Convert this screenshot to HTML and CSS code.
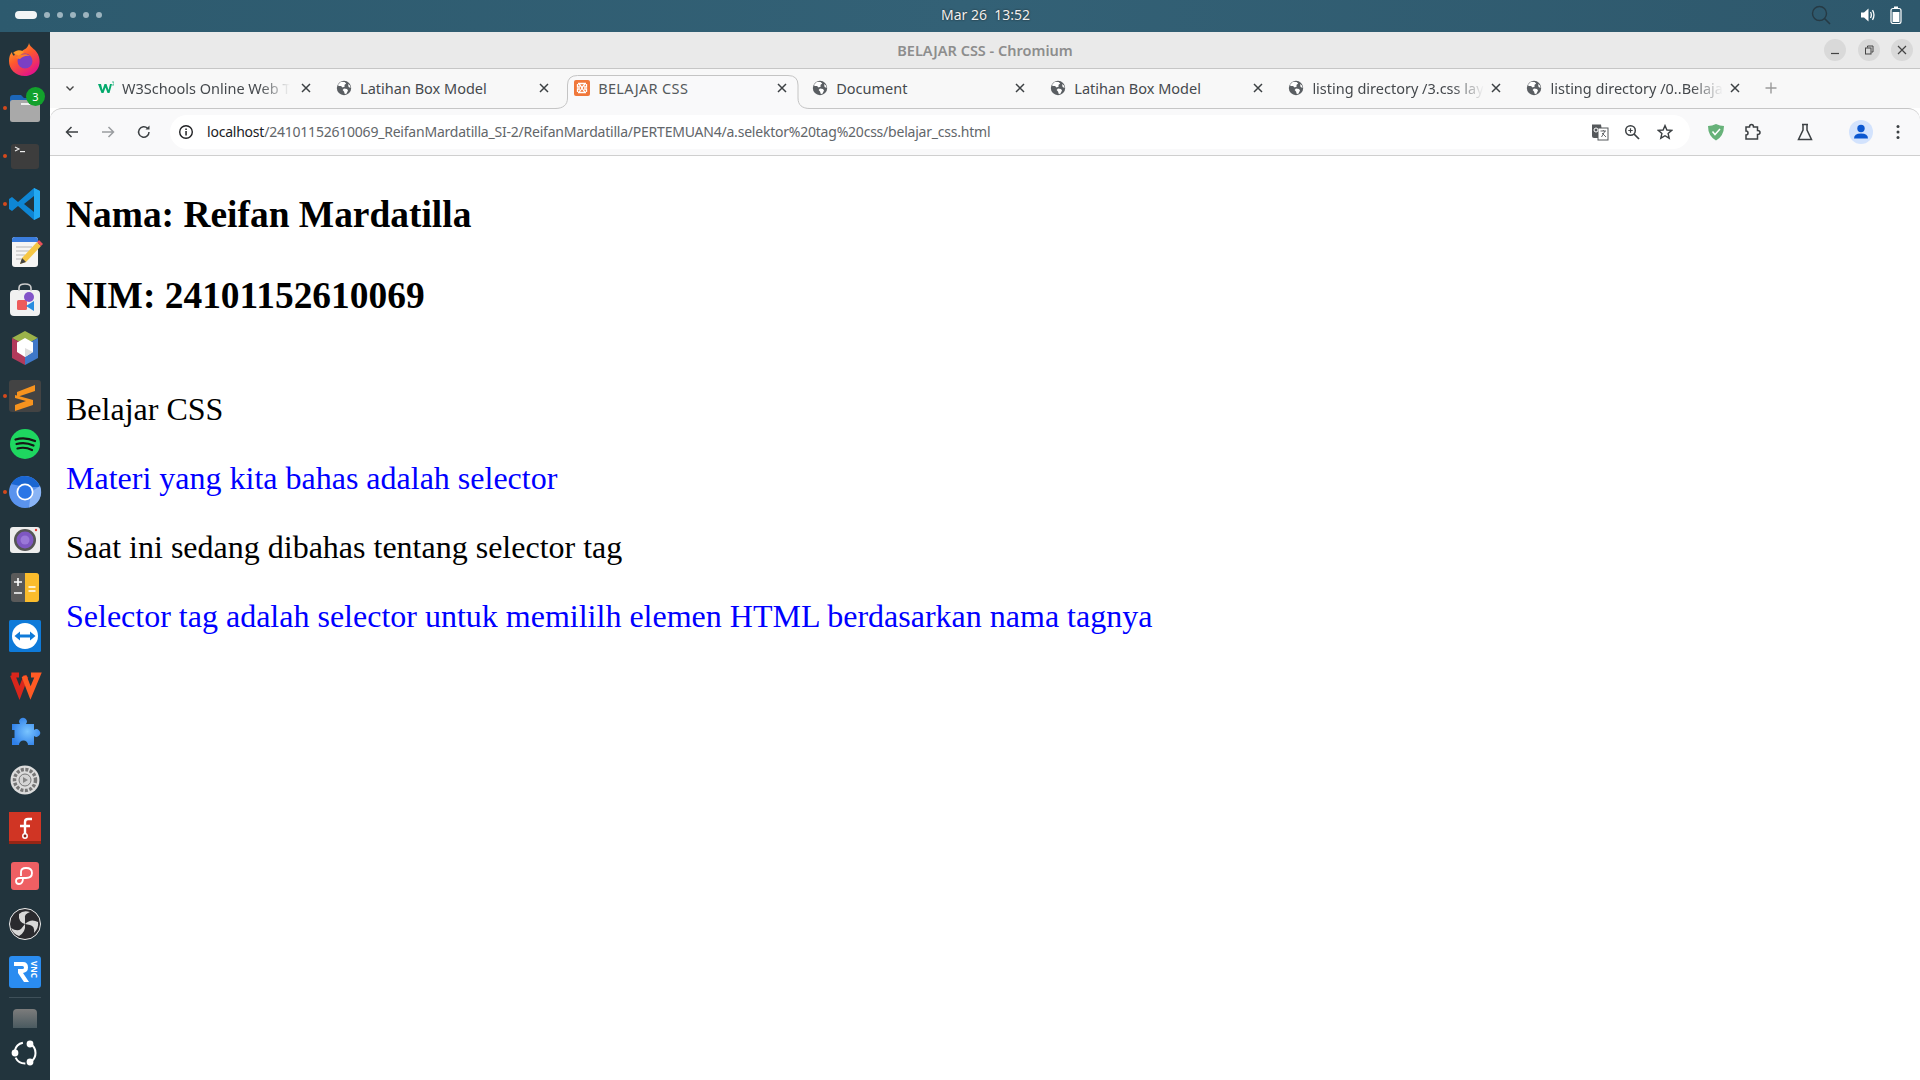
FILE: index.html
```html
<!DOCTYPE html>
<html>
<head>
<meta charset="utf-8">
<title>BELAJAR CSS - Chromium</title>
<link rel="stylesheet" href="styles.css">
</head>
<body>

<svg class="defs" width="0" height="0">
  <symbol id="globe" viewBox="0 0 16 16">
    <circle cx="8" cy="8" r="7.2" fill="#5a5e62"/>
    <path d="M5 1.8 L8.6 2 L10.2 3.6 L8.4 5 L8.8 6.6 L6.6 7.4 L5 6 L2.4 6 L2.2 4.6Z M8 8.4 L11 9 L12 10.6 L10.4 13.8 L8.8 14 L8 11.4 L6.6 10Z M12 4 L14 5.4 L14.6 8 L12.6 7Z" fill="#fff"/>
  </symbol>
  <symbol id="close" viewBox="0 0 12 12">
    <path d="M2 2 L10 10 M10 2 L2 10" stroke="#3c4043" stroke-width="1.5" fill="none"/>
  </symbol>
</svg>

<!-- top panel -->
<div class="panel">
  <div class="workspaces">
    <span class="ws-pill"></span>
    <span class="ws-dot"></span><span class="ws-dot"></span><span class="ws-dot"></span><span class="ws-dot"></span><span class="ws-dot"></span>
  </div>
  <div class="clock">Mar 26&nbsp;&nbsp;13:52</div>
  <div class="tray">
    <svg width="24" height="24" viewBox="0 0 24 24" class="tray-search"><circle cx="10.5" cy="10.5" r="7" fill="none" stroke="#263a44" stroke-width="1.4"/><path d="M15.5 15.5 L21 21" stroke="#263a44" stroke-width="1.6"/></svg>
    <svg width="16" height="16" viewBox="0 0 16 16" class="tray-vol"><path d="M1 5.5 H4 L8.5 1.5 V14.5 L4 10.5 H1Z" fill="#fff"/><path d="M10.5 5 Q12.2 8 10.5 11 M12.5 3.2 Q15.4 8 12.5 12.8" stroke="#fff" stroke-width="1.3" fill="none"/></svg>
    <svg width="12" height="18" viewBox="0 0 12 18" class="tray-bat"><rect x="4" y="0.5" width="4" height="2" fill="#fff"/><rect x="1" y="2.5" width="10" height="15" rx="2" fill="none" stroke="#fff" stroke-width="1.2"/><rect x="2.6" y="6" width="6.8" height="10" fill="#fff"/></svg>
  </div>
</div>

<div class="desktop">

  <!-- dock -->
  <div class="dock">
    <div class="dock-item">
      <svg width="40" height="40" viewBox="0 0 40 40"><defs><linearGradient id="fx" x1="0" y1="0" x2="0.6" y2="1"><stop offset="0" stop-color="#ffbd2e"/><stop offset="0.5" stop-color="#ff5a2c"/><stop offset="1" stop-color="#e31587"/></linearGradient></defs><path d="M24 3 C25 8 32 9 34 17 C37 29 28 36 20 36 C10 36 4 29 4 21 C4 17 5 14 7 12 C7 14 8 15 9 16 C10 12 14 10 17 11 C20 9 23 8 24 3Z" fill="url(#fx)"/><path d="M8 13 C12 9 16 10 19 12 L14 16Z" fill="#ff9a2b"/><circle cx="20" cy="21" r="7.5" fill="#7b3fc4"/><path d="M10 18 C14 14 22 13 25 16 C21 15 17 17 15 19Z" fill="#ff7b2c"/></svg>
    </div>
    <div class="dock-item running">
      <svg width="40" height="40" viewBox="0 0 40 40"><path d="M5 10 Q5 7 8 7 H16 L19 10 H28 V20 H5Z" fill="#1c66b8"/><rect x="5" y="12" width="30" height="22" rx="2.500" fill="#a9a9a9"/><rect x="16" y="15" width="9" height="2" fill="#eee"/></svg>
      <span class="dock-badge">3</span>
    </div>
    <div class="dock-item running">
      <svg width="40" height="40" viewBox="0 0 40 40"><rect x="6" y="8" width="28" height="25" rx="3" fill="#3d3d3d"/><path d="M10 11 L14 13 L10 15" stroke="#eee" stroke-width="1.100" fill="none"/><rect x="15" y="15" width="5" height="1.200" fill="#eee"/></svg>
    </div>
    <div class="dock-item running">
      <svg width="40" height="40" viewBox="0 0 40 40"><path d="M29 4 L35 7 V33 L29 36 L13 22 L7 27 L4 25 V15 L7 13 L13 18Z M29 12 L19 20 L29 28Z" fill="#0e86d4" fill-rule="evenodd"/><path d="M29 4 L35 7 V33 L29 36Z" fill="#23a9f2"/></svg>
    </div>
    <div class="dock-item">
      <svg width="40" height="40" viewBox="0 0 40 40"><rect x="7" y="5" width="26" height="30" rx="3" fill="#f6f5f4"/><path d="M7 8 Q7 5 10 5 H30 Q33 5 33 8 V10 H7Z" fill="#3b7ddd"/><path d="M11 15 H27 M11 19 H24 M11 23 H20 M11 27 H16" stroke="#b5b5b5" stroke-width="1.2"/><path d="M15 32 L17 26 L32 10 L36 14 L21 30Z" fill="#f6c644"/><path d="M32 10 L34 8 L38 12 L36 14Z" fill="#e8505b"/><path d="M15 32 L17 26 L21 30Z" fill="#444"/></svg>
    </div>
    <div class="dock-item">
      <svg width="40" height="40" viewBox="0 0 40 40"><rect x="5" y="10" width="30" height="26" rx="4" fill="#f1f1f1"/><path d="M14 11 V8 Q14 4 20 4 Q26 4 26 8 V11" fill="none" stroke="#ccc" stroke-width="1.6"/><rect x="12" y="20" width="10" height="10" rx="1.5" fill="#ed5b5b"/><circle cx="24" cy="17" r="5" fill="#8354c9"/><path d="M29 21 V31 L21 26Z" fill="#2a8de0"/></svg>
    </div>
    <div class="dock-item">
      <svg width="40" height="40" viewBox="0 0 40 40"><path d="M20 3 L33 10 L20 17 L7 10Z" fill="#9bb24a"/><path d="M7 10 L20 17 V37 L7 30Z" fill="#b23a5b"/><path d="M33 10 L20 17 V37 L33 30Z" fill="#3f78c8"/><path d="M20 10 L28 14.5 V24 L20 29 L12 24 V14.5Z" fill="#fff"/><path d="M20 20 L28 24 L20 29Z" fill="#ddd"/></svg>
    </div>
    <div class="dock-item running">
      <svg width="40" height="40" viewBox="0 0 40 40"><rect x="4" y="4" width="32" height="32" rx="3" fill="#434343"/><path d="M30 9 V15 L12 21 V16Z M10 19 L28 24 V29 L10 35 V29 L21 25 L10 22Z" fill="#f7931e"/></svg>
    </div>
    <div class="dock-item">
      <svg width="40" height="40" viewBox="0 0 40 40"><circle cx="20" cy="20" r="15" fill="#1ed760"/><path d="M10.5 15.5 Q20 12.5 30 17 M11.5 20 Q20 17.5 28.5 21.5 M12.5 24.5 Q20 22.5 27 26" stroke="#161616" stroke-width="2.2" stroke-linecap="round" fill="none"/></svg>
    </div>
    <div class="dock-item running">
      <svg width="40" height="40" viewBox="0 0 40 40"><circle cx="20" cy="20" r="16" fill="#5a93ee"/><path d="M6 12 A16 16 0 0 1 35 15 L20 15Z" fill="#1a66d2"/><path d="M24 35.5 A16 16 0 0 0 35 14 L26 20Z" fill="#8ab4f5"/><circle cx="20" cy="20" r="8.5" fill="#fff"/><circle cx="20" cy="20" r="6.8" fill="#2a75e6"/></svg>
    </div>
    <div class="dock-item">
      <svg width="40" height="40" viewBox="0 0 40 40"><rect x="5" y="7" width="30" height="26" rx="3" fill="#ededed"/><circle cx="20" cy="20" r="11" fill="#555"/><circle cx="20" cy="20" r="8.5" fill="#7e57c2"/><circle cx="20" cy="20" r="4.5" fill="#9a78d8"/><circle cx="31" cy="10" r="1.2" fill="#e53935"/></svg>
    </div>
    <div class="dock-item">
      <svg width="40" height="40" viewBox="0 0 40 40"><rect x="6" y="5" width="28" height="29" rx="3" fill="#5a5a5a"/><path d="M20 5 H31 Q34 5 34 8 V31 Q34 34 31 34 H20Z" fill="#fbbc2c"/><path d="M9 14 H17 M13 10 V18 M9 25 H17 M23.500 19 H30.500 M23.500 23 H30.500" stroke="#fff" stroke-width="1.6"/></svg>
    </div>
    <div class="dock-item">
      <svg width="40" height="40" viewBox="0 0 40 40"><rect x="4" y="4" width="32" height="32" rx="1.500" fill="#0e7ad9"/><circle cx="20" cy="20" r="13" fill="#fff"/><path d="M9.500 20 L15 15.500 V18.500 H25 V15.500 L30.500 20 L25 24.500 V21.500 H15 V24.500Z" fill="#0e7ad9"/></svg>
    </div>
    <div class="dock-item">
      <svg width="40" height="40" viewBox="0 0 40 40"><path d="M6.500 11 H14 M7.500 11 L14.500 29 L21 12" fill="none" stroke="#d9261c" stroke-width="5"/><path d="M19 12 L25.500 29 L33 11 H26" fill="none" stroke="#ff5a24" stroke-width="5"/></svg>
    </div>
    <div class="dock-item">
      <svg width="40" height="40" viewBox="0 0 40 40"><defs><radialGradient id="pz" cx="0.55" cy="0.5" r="0.6"><stop offset="0" stop-color="#79c4ff"/><stop offset="1" stop-color="#2f7fe8"/></radialGradient></defs><path d="M7 12 H15 A3.800 3.800 0 1 1 21 12 H29 V18 A3.800 3.800 0 1 1 29 24 V33 H23 A4.500 4.500 0 1 0 14 33 H7 V26 H9.500 V18 H7Z" fill="url(#pz)"/></svg>
    </div>
    <div class="dock-item">
      <svg width="40" height="40" viewBox="0 0 40 40"><circle cx="20" cy="20" r="14.500" fill="#dcdcdc"/><circle cx="20" cy="20" r="10.500" fill="none" stroke="#777" stroke-width="3.500" stroke-dasharray="3 1.500"/><circle cx="20" cy="20" r="6" fill="#d4d4d4" stroke="#777" stroke-width="1"/><path d="M18 17 L23 20 L18 23Z" fill="#888"/></svg>
    </div>
    <div class="dock-item">
      <svg width="40" height="40" viewBox="0 0 40 40"><rect x="4" y="4" width="32" height="32" fill="#d03524"/><rect x="4" y="33" width="32" height="3" fill="#962515"/><path d="M27 11 H23 Q20 11 20 14 V27 M15 18 H25" stroke="#fff" stroke-width="2.400" fill="none"/><circle cx="20" cy="28" r="2.200" fill="#8f2115" stroke="#fff" stroke-width="1.500"/></svg>
    </div>
    <div class="dock-item">
      <svg width="40" height="40" viewBox="0 0 40 40"><rect x="6" y="6" width="28" height="28" rx="3" fill="#ee5f63"/><path d="M16 20 V16 Q16 12 21 12 Q27 12 27 17 Q27 22 21 22 H15 Q11 22 11 25 Q11 28 14 28 Q18 28 18 22" stroke="#fff" stroke-width="1.800" fill="none"/></svg>
    </div>
    <div class="dock-item">
      <svg width="40" height="40" viewBox="0 0 40 40"><circle cx="20" cy="20" r="15.500" fill="#2a2a2e" stroke="#eee" stroke-width="1"/><path d="M20 20 Q13 18 14 10 Q18 6 25 8 Q19 10 20 14 Z M20 20 Q26 14 33 18 Q34 24 29 29 Q30 22 25 21 Z M20 20 Q21 28 14 32 Q8 30 6 24 Q12 28 16 25 Z" fill="#d8d8d8"/></svg>
    </div>
    <div class="dock-item">
      <svg width="40" height="40" viewBox="0 0 40 40"><rect x="4" y="4" width="32" height="32" rx="3" fill="#2a8cf0"/><path d="M9 10 H18 Q23 10 23 15.500 Q23 20 18 21 L24 30 H19 L13 21 V17 H17.500 Q19 17 19 15.500 Q19 14 17.500 14 H9Z" fill="#fff"/><text x="0" y="0" class="rvnc" transform="translate(26 9) rotate(90)">VNC</text></svg>
    </div>
    <div class="dock-sep"></div>
    <div class="dock-trash"></div>
    <div class="dock-ubuntu">
      <svg width="32" height="32" viewBox="0 0 32 32"><circle cx="16" cy="16" r="10.500" fill="none" stroke="#fff" stroke-width="2" stroke-dasharray="12 7" stroke-dashoffset="3"/><circle cx="6" cy="16" r="3.400" fill="#fff"/><circle cx="21" cy="7" r="3.400" fill="#fff"/><circle cx="21" cy="25" r="3.400" fill="#fff"/></svg>
    </div>
  </div>

  <!-- browser window -->
  <div class="window">
    <div class="titlebar">
      <span class="title-text">BELAJAR CSS - Chromium</span>
      <div class="win-btns">
        <span class="win-btn"><svg width="12" height="12" viewBox="0 0 12 12"><path d="M2 9.500 H10" stroke="#444" stroke-width="1.200"/></svg></span>
        <span class="win-btn"><svg width="12" height="12" viewBox="0 0 12 12"><rect x="2.500" y="4" width="5.500" height="6" fill="none" stroke="#444" stroke-width="1"/><path d="M4.500 3.500 V2 H10 V8 H8.500" fill="none" stroke="#444" stroke-width="1"/></svg></span>
        <span class="win-btn"><svg width="12" height="12" viewBox="0 0 12 12"><path d="M2 2 L10 10 M10 2 L2 10" stroke="#444" stroke-width="1.200"/></svg></span>
      </div>
    </div>

    <div class="tabstrip">
      <div class="tab-list-btn"><svg width="12" height="12" viewBox="0 0 12 12"><path d="M2.500 4.500 L6 8 L9.500 4.500" fill="none" stroke="#444" stroke-width="1.400"/></svg></div>
      <div class="tab">
        <svg class="tab-icon" width="16" height="16" viewBox="0 0 16 16"><path d="M0 4 H3 L4.500 10 L6.500 4 H8.500 L10.500 10 L12 4 H14 L11.500 13 H9.500 L7.500 7.500 L5.500 13 H3.500Z" fill="#04aa6d"/><path d="M14 2 H16 V5 H14" stroke="#04aa6d" fill="none" stroke-width="0.700"/></svg>
        <span class="tab-title fade">W3Schools Online Web T</span>
        <svg class="tab-close" width="12" height="12"><use href="#close"/></svg>
      </div>
      <div class="tab">
        <svg class="tab-icon" width="16" height="16"><use href="#globe"/></svg>
        <span class="tab-title">Latihan Box Model</span>
        <svg class="tab-close" width="12" height="12"><use href="#close"/></svg>
      </div>
      <div class="tab active">
        <svg class="tab-shape" width="255" height="34" viewBox="0 0 255 34"><path d="M0 34 V33.500 C8 33.500 12.500 30 12.500 23 V10 Q12.500 0.500 22.500 0.500 H233 Q243 0.500 243 10 V23 C243 30 247 33.500 255 33.500 V34Z" fill="#f9f9fa"/><path d="M0 33.500 C8 33.500 12.500 30 12.500 23 V10 Q12.500 0.500 22.500 0.500 H233 Q243 0.500 243 10 V23 C243 30 247 33.500 255 33.500" fill="none" stroke="#c4c4c4"/></svg>
        <svg class="tab-icon" width="16" height="16" viewBox="0 0 16 16"><rect width="16" height="16" rx="2" fill="#f0773a"/><path d="M4 3.500 H12 M4 12.500 H12 M5 4 Q7 6 8 8 Q9 6 11 4 M5 12 Q7 10 8 8 Q9 10 11 12 M3.500 4 V7 H6 M12.500 4 V7 H10 M3.500 12 V9 H6 M12.500 12 V9 H10" fill="none" stroke="#fff" stroke-width="1.300"/></svg>
        <span class="tab-title">BELAJAR CSS</span>
        <svg class="tab-close" width="12" height="12"><use href="#close"/></svg>
      </div>
      <div class="tab">
        <svg class="tab-icon" width="16" height="16"><use href="#globe"/></svg>
        <span class="tab-title">Document</span>
        <svg class="tab-close" width="12" height="12"><use href="#close"/></svg>
      </div>
      <div class="tab">
        <svg class="tab-icon" width="16" height="16"><use href="#globe"/></svg>
        <span class="tab-title">Latihan Box Model</span>
        <svg class="tab-close" width="12" height="12"><use href="#close"/></svg>
      </div>
      <div class="tab">
        <svg class="tab-icon" width="16" height="16"><use href="#globe"/></svg>
        <span class="tab-title fade">listing directory /3.css lay</span>
        <svg class="tab-close" width="12" height="12"><use href="#close"/></svg>
      </div>
      <div class="tab">
        <svg class="tab-icon" width="16" height="16"><use href="#globe"/></svg>
        <span class="tab-title fade">listing directory /0..Belaja</span>
        <svg class="tab-close" width="12" height="12"><use href="#close"/></svg>
      </div>
      <div class="new-tab"><svg width="14" height="14" viewBox="0 0 14 14"><path d="M7 1.500 V12.500 M1.500 7 H12.500" stroke="#9a9a9a" stroke-width="1.400"/></svg></div>
    </div>

    <div class="toolbar">
      <svg class="nav-btn" width="16" height="16" viewBox="0 0 16 16"><path d="M14 8 H3 M7.500 3 L2.500 8 L7.500 13" fill="none" stroke="#3c4043" stroke-width="1.500"/></svg>
      <svg class="nav-btn" width="16" height="16" viewBox="0 0 16 16"><path d="M2 8 H13 M8.500 3 L13.500 8 L8.500 13" fill="none" stroke="#9a9da0" stroke-width="1.500"/></svg>
      <svg class="nav-btn" width="16" height="16" viewBox="0 0 16 16"><path d="M13 8 A5.200 5.200 0 1 1 11.500 4.300" fill="none" stroke="#3c4043" stroke-width="1.500"/><path d="M9.500 5.500 H13.500 V1.500Z" fill="#3c4043"/></svg>
      <div class="omnibox">
        <svg class="info-icon" width="16" height="16" viewBox="0 0 16 16"><circle cx="8" cy="8" r="6.300" fill="none" stroke="#202124" stroke-width="1.400"/><rect x="7.300" y="7" width="1.500" height="4.500" fill="#202124"/><rect x="7.300" y="4.500" width="1.500" height="1.500" fill="#202124"/></svg>
        <span class="url"><span class="url-host">localhost</span>/24101152610069_ReifanMardatilla_SI-2/ReifanMardatilla/PERTEMUAN4/a.selektor%20tag%20css/belajar_css.html</span>
        <svg class="omni-icon translate" width="18" height="18" viewBox="0 0 18 18"><path d="M1 1.500 H10 L12 15 H3 Q1 15 1 13Z" fill="#55585b"/><rect x="7" y="5" width="10" height="12" fill="#fff" stroke="#55585b" stroke-width="1"/><path d="M9.500 8 H15 M12.300 7 V8 M10.500 14 L14 8 M11 10 L15 14" stroke="#55585b" stroke-width="0.900" fill="none"/><circle cx="5" cy="7" r="2" fill="none" stroke="#fff" stroke-width="1"/></svg>
        <svg class="omni-icon zoom-ic" width="16" height="16" viewBox="0 0 16 16"><circle cx="6.500" cy="6.500" r="4.800" fill="none" stroke="#3c4043" stroke-width="1.500"/><path d="M10 10 L15 15" stroke="#3c4043" stroke-width="1.700"/><path d="M4.300 6.500 H8.700 M6.500 4.300 V8.700" stroke="#3c4043" stroke-width="1.200"/></svg>
        <svg class="omni-icon star" width="16" height="16" viewBox="0 0 16 16"><path d="M8 1.600 L9.900 6 L14.700 6.400 L11.100 9.500 L12.200 14.200 L8 11.700 L3.800 14.200 L4.900 9.500 L1.300 6.400 L6.100 6Z" fill="none" stroke="#3c4043" stroke-width="1.400"/></svg>
      </div>
      <svg class="bar-icon shield" width="18" height="18" viewBox="0 0 18 18"><path d="M9 1 Q13 3 17 3 Q17 13 9 17.500 Q1 13 1 3 Q5 3 9 1Z" fill="#67b279"/><path d="M5.500 8.500 L8 11.500 L13 6" fill="none" stroke="#fff" stroke-width="1.500"/></svg>
      <svg class="bar-icon ext" width="18" height="18" viewBox="0 0 18 18"><path d="M3 4 H6.500 Q6.500 1.500 8.500 1.500 Q10.500 1.500 10.500 4 H14.500 V7.500 Q17 7.500 17 9.500 Q17 11.500 14.500 11.500 V16 H3 V12 Q5 12 5 10 Q5 8 3 8Z" fill="none" stroke="#3c4043" stroke-width="1.500"/></svg>
      <svg class="bar-icon flask" width="18" height="18" viewBox="0 0 18 18"><path d="M6 1.500 H12 M7 1.500 V7 L2.500 16.500 H15.500 L11 7 V1.500" fill="none" stroke="#3c4043" stroke-width="1.500"/></svg>
      <div class="avatar"><svg width="20" height="20" viewBox="0 0 20 20"><circle cx="10" cy="6.500" r="3.700" fill="#0b57d0"/><path d="M3 16.500 Q3 11.500 10 11.500 Q17 11.500 17 16.500Z" fill="#0b57d0"/></svg></div>
      <svg class="bar-icon menu" width="16" height="16" viewBox="0 0 16 16"><circle cx="8" cy="2.500" r="1.500" fill="#3c4043"/><circle cx="8" cy="8" r="1.500" fill="#3c4043"/><circle cx="8" cy="13.500" r="1.500" fill="#3c4043"/></svg>
    </div>

    <!-- the page itself -->
    <div class="page">
      <h3>Nama: Reifan Mardatilla</h3>
      <h3>NIM: 24101152610069</h3>
      <br>
      Belajar CSS
      <p class="biru">Materi yang kita bahas adalah selector</p>
      <p>Saat ini sedang dibahas tentang selector tag</p>
      <p class="biru">Selector tag adalah selector untuk memililh elemen HTML berdasarkan nama tagnya</p>
    </div>
  </div>
</div>

</body>
</html>
```

FILE: styles.css
```css
html,body{margin:0;padding:0;height:100%;overflow:hidden;}
body{display:flex;flex-direction:column;width:1920px;height:1080px;background:#fff;font-family:"Noto Sans",sans-serif;}
.defs{display:block;height:0;}

/* top panel */
.panel{height:32px;flex:none;box-sizing:border-box;padding-bottom:2px;display:flex;align-items:center;background:linear-gradient(90deg,#2d5a6e,#336176 50%,#2e586c);}
.workspaces{display:flex;align-items:center;gap:7px;margin-left:15px;width:300px;}
.ws-pill{width:22px;height:8px;border-radius:4px;background:#f2f5f6;}
.ws-dot{width:6px;height:6px;border-radius:50%;background:#9db4bf;}
.clock{flex:1;text-align:center;color:#f0f0f0;font-size:14px;padding-left:36px;margin-bottom:1px;text-shadow:0 0 2px #1a1a1a;}
.tray{width:300px;display:flex;align-items:center;justify-content:flex-end;}
.tray-search{margin-right:27px;}
.tray-vol{margin-right:14px;}
.tray-bat{margin-right:18px;}

.desktop{flex:1;display:flex;min-height:0;}

/* dock */
.dock{width:50px;flex:none;background:#22343d;display:flex;flex-direction:column;align-items:center;padding-top:4px;box-sizing:border-box;}
.dock-item{width:50px;height:48px;flex:none;display:flex;align-items:center;justify-content:center;position:relative;}
.dock-item.running::before{content:"";position:absolute;left:3px;top:22px;width:4px;height:4px;border-radius:50%;background:#d4491c;}
.dock-badge{position:absolute;left:26px;top:3px;width:19px;height:19px;border-radius:50%;background:#12a12c;color:#fff;font-size:11px;line-height:19px;text-align:center;}
.rvnc{font-family:"Noto Sans",sans-serif;font-size:8px;font-weight:bold;fill:#fff;}
.dock-sep{width:32px;height:1px;background:#3f5059;margin-top:1px;flex:none;}
.dock-trash{width:24px;height:19px;margin-top:11px;flex:none;border-radius:4px 4px 0 0;background:linear-gradient(#7c7c7c,#4a5a60);}
.dock-ubuntu{margin-top:9px;flex:none;height:32px;}

/* window */
.window{flex:1;min-width:0;display:flex;flex-direction:column;background:#fff;}
.titlebar{height:36px;flex:none;background:#eaeaea;display:flex;align-items:center;justify-content:center;position:relative;}
.title-text{font-size:14.500px;font-weight:600;color:#8d8d8d;}
.win-btns{position:absolute;right:7px;top:7px;display:flex;gap:11.500px;}
.win-btn{width:22px;height:22px;border-radius:50%;background:#d9d9d9;display:flex;align-items:center;justify-content:center;}

.tabstrip{height:40px;flex:none;box-sizing:border-box;background:#f8f8f8;border-top:1px solid #c6c6c6;display:flex;align-items:flex-start;padding-top:6px;position:relative;z-index:2;}
.tab-list-btn{width:40px;height:25px;flex:none;display:flex;align-items:center;justify-content:center;}
.tab{width:238.100px;height:25px;flex:none;box-sizing:border-box;display:flex;align-items:center;padding:0 6px 0 8px;font-size:14.500px;color:#45494d;position:relative;}
.tab-icon{flex:none;margin-right:8px;}
.tab-title{white-space:nowrap;}
.tab-title.fade{flex:none;-webkit-mask-image:linear-gradient(90deg,#000 82%,transparent);mask-image:linear-gradient(90deg,#000 82%,transparent);}
.tab-close{flex:none;margin-left:auto;margin-right:10px;}
.tab.active{width:231px;margin:0 6px 0 1px;padding:0 0 0 7px;z-index:2;color:#55595c;}
.tab.active .tab-title{letter-spacing:0.350px;}
.tab-shape{position:absolute;left:-12px;top:0;z-index:-1;}
.new-tab{width:28px;height:25px;display:flex;align-items:center;justify-content:center;}

.toolbar{height:48px;flex:none;box-sizing:border-box;background:#f9f9fa;border-top:1px solid #c6c6c6;border-bottom:1px solid #cfcfcf;border-radius:12px 12px 0 0;display:flex;align-items:center;padding-left:14px;}
.nav-btn{flex:none;margin-right:20px;}
.omnibox{width:1520px;height:34px;flex:none;margin-left:-2px;background:#fff;border-radius:17px;display:flex;align-items:center;padding-left:8px;box-sizing:border-box;}
.info-icon{flex:none;margin-right:13px;}
.url{flex:1;min-width:0;white-space:nowrap;font-size:14px;color:#62666a;letter-spacing:-0.220px;margin-bottom:2px;}
.url-host{color:#202124;}
.omni-icon{flex:none;}
.translate{margin-right:15px;}
.zoom-ic{margin-right:17px;}
.star{margin-right:17px;}
.bar-icon{flex:none;}
.shield{margin-left:17px;}
.ext{margin-left:18px;}
.flask{margin-left:35px;}
.avatar{width:24px;height:24px;border-radius:50%;background:#d3e3fd;display:flex;align-items:center;justify-content:center;margin-left:35px;}
.menu{margin-left:17px;}

/* page content */
.page{flex:1;min-height:0;padding:0 16px;overflow:hidden;font-family:"Liberation Serif",serif;font-size:32px;color:#000;}
.page h3{font-size:37.440px;font-weight:bold;margin:37.440px 0;}
.page p{margin:32px 0;}
.biru{color:#00f;}
```
